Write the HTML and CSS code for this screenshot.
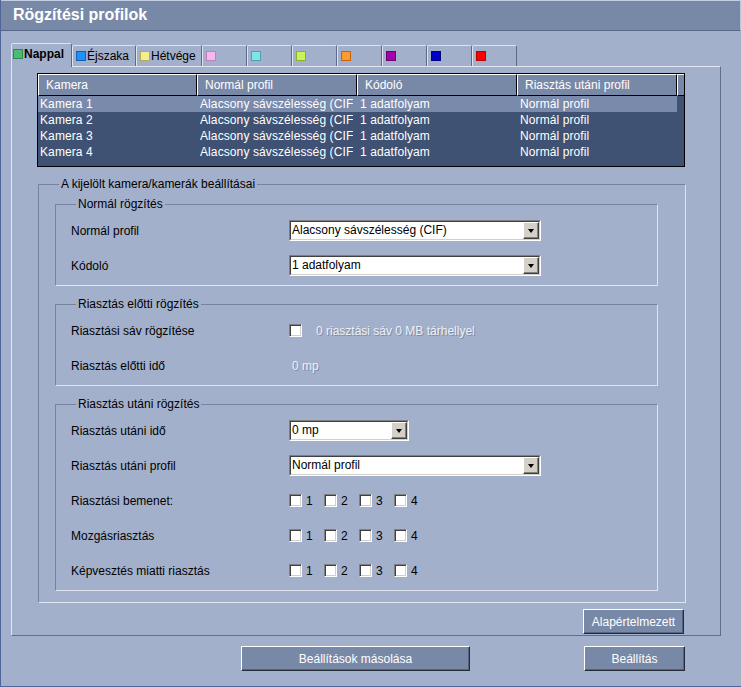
FILE: index.html
```html
<!DOCTYPE html>
<html lang="hu">
<head>
<meta charset="utf-8">
<title>Rögzítési profilok</title>
<link rel="stylesheet" href="styles.css">
</head>
<body>
<div class="window">
  <header class="titlebar"><h1 class="title">Rögzítési profilok</h1></header>
  <main class="main">
    <nav class="tabs">
      <div class="tab tab-active tab-nappal"><span class="swatch sw-green"></span>Nappal</div>
      <div class="tab tab-ejszaka"><span class="swatch sw-blue"></span>Éjszaka</div>
      <div class="tab tab-hetvege"><span class="swatch sw-yellow"></span>Hétvége</div>
      <div class="tab tab-color"><span class="swatch sw-pink"></span></div>
      <div class="tab tab-color"><span class="swatch sw-cyan"></span></div>
      <div class="tab tab-color"><span class="swatch sw-lime"></span></div>
      <div class="tab tab-color"><span class="swatch sw-orange"></span></div>
      <div class="tab tab-color"><span class="swatch sw-purple"></span></div>
      <div class="tab tab-color"><span class="swatch sw-navy"></span></div>
      <div class="tab tab-color"><span class="swatch sw-red"></span></div>
    </nav>
    <section class="panel">
      <div class="cam-table">
        <div class="thead">
          <div class="th">Kamera</div>
          <div class="th">Normál profil</div>
          <div class="th">Kódoló</div>
          <div class="th">Riasztás utáni profil</div>
          <div class="th th-stub"></div>
        </div>
        <div class="tbody">
          <div class="tr tr-selected"><div class="td">Kamera 1</div><div class="td">Alacsony sávszélesség (CIF)</div><div class="td">1 adatfolyam</div><div class="td">Normál profil</div></div>
          <div class="tr"><div class="td">Kamera 2</div><div class="td">Alacsony sávszélesség (CIF)</div><div class="td">1 adatfolyam</div><div class="td">Normál profil</div></div>
          <div class="tr"><div class="td">Kamera 3</div><div class="td">Alacsony sávszélesség (CIF)</div><div class="td">1 adatfolyam</div><div class="td">Normál profil</div></div>
          <div class="tr"><div class="td">Kamera 4</div><div class="td">Alacsony sávszélesség (CIF)</div><div class="td">1 adatfolyam</div><div class="td">Normál profil</div></div>
        </div>
      </div>

      <fieldset class="group group-outer">
        <legend class="legend legend-outer">A kijelölt kamera/kamerák beállításai</legend>

        <fieldset class="group group-inner">
          <legend class="legend legend-inner">Normál rögzítés</legend>
          <div class="row">
            <span class="label">Normál profil</span>
            <div class="select select-wide"><div class="select-inner"><span class="select-text">Alacsony sávszélesség (CIF)</span><span class="select-btn"><span class="arrow"></span></span></div></div>
          </div>
          <div class="row">
            <span class="label">Kódoló</span>
            <div class="select select-wide"><div class="select-inner"><span class="select-text">1 adatfolyam</span><span class="select-btn"><span class="arrow"></span></span></div></div>
          </div>
        </fieldset>

        <fieldset class="group group-inner">
          <legend class="legend legend-inner">Riasztás előtti rögzítés</legend>
          <div class="row">
            <span class="label">Riasztási sáv rögzítése</span>
            <span class="box"></span>
            <span class="disabled-text disabled-after-box">0 riasztási sáv 0 MB tárhellyel</span>
          </div>
          <div class="row">
            <span class="label">Riasztás előtti idő</span>
            <span class="disabled-text disabled-value">0 mp</span>
          </div>
        </fieldset>

        <fieldset class="group group-inner">
          <legend class="legend legend-inner">Riasztás utáni rögzítés</legend>
          <div class="row">
            <span class="label">Riasztás utáni idő</span>
            <div class="select select-small"><div class="select-inner"><span class="select-text">0 mp</span><span class="select-btn"><span class="arrow"></span></span></div></div>
          </div>
          <div class="row">
            <span class="label">Riasztás utáni profil</span>
            <div class="select select-wide"><div class="select-inner"><span class="select-text">Normál profil</span><span class="select-btn"><span class="arrow"></span></span></div></div>
          </div>
          <div class="row">
            <span class="label">Riasztási bemenet:</span>
            <div class="checks">
              <label class="check"><span class="box"></span>1</label>
              <label class="check"><span class="box"></span>2</label>
              <label class="check"><span class="box"></span>3</label>
              <label class="check"><span class="box"></span>4</label>
            </div>
          </div>
          <div class="row">
            <span class="label">Mozgásriasztás</span>
            <div class="checks">
              <label class="check"><span class="box"></span>1</label>
              <label class="check"><span class="box"></span>2</label>
              <label class="check"><span class="box"></span>3</label>
              <label class="check"><span class="box"></span>4</label>
            </div>
          </div>
          <div class="row">
            <span class="label">Képvesztés miatti riasztás</span>
            <div class="checks">
              <label class="check"><span class="box"></span>1</label>
              <label class="check"><span class="box"></span>2</label>
              <label class="check"><span class="box"></span>3</label>
              <label class="check"><span class="box"></span>4</label>
            </div>
          </div>
        </fieldset>
      </fieldset>

      <div class="panel-footer">
        <button class="btn" type="button">Alapértelmezett</button>
      </div>
    </section>
    <div class="actions">
      <button class="btn btn-wide" type="button">Beállítások másolása</button>
      <button class="btn" type="button">Beállítás</button>
    </div>
  </main>
</div>
</body>
</html>
```

FILE: styles.css
```css
html, body {
  margin: 0;
  padding: 0;
  background: #a3b0cb;
}
body {
  font-family: "Liberation Sans", Arial, sans-serif;
  font-size: 12px;
  color: #000;
}
.window {
  width: 741px;
  height: 687px;
  box-sizing: border-box;
  border-left: 1px solid #4f6597;
  border-bottom: 1px solid #4f6597;
  background: #a3b0cb;
  overflow: hidden;
}
.titlebar {
  height: 31px;
  box-sizing: border-box;
  margin-left: -1px;
  background: #7889a8;
  border-top: 1px solid #c3cde2;
  border-left: 1px solid #b9c4dc;
  border-right: 1px solid #b9c4dc;
  border-bottom: 1px solid #56678a;
}
.title {
  margin: 0;
  padding: 0 0 0 12px;
  font-size: 16px;
  font-weight: bold;
  color: #fff;
  line-height: 28px;
}
.main {
  padding: 12px 0 0 10px;
}

/* Tabs */
.tabs {
  display: flex;
  align-items: flex-end;
  height: 23px;
}
.tab {
  box-sizing: border-box;
  height: 21px;
  border: 1px solid;
  border-bottom: 0;
  border-color: #dde3ef #5e6b88 transparent #dde3ef;
  border-radius: 2px 2px 0 0;
  display: flex;
  align-items: center;
  padding-left: 3px;
  white-space: nowrap;
  background: #a3b0cb;
}
.tab-active {
  height: 24px;
  margin-bottom: -1px;
  position: relative;
  z-index: 1;
  padding-left: 1px;
  padding-bottom: 3px;
  font-weight: bold;
}
.tab-nappal { width: 61px; }
.tab-ejszaka { width: 64px; }
.tab-hetvege { width: 66px; }
.tab-color { width: 45px; }
.swatch {
  width: 10px;
  height: 10px;
  box-sizing: border-box;
  border: 1px solid;
  margin-right: 1px;
  flex: none;
}
.sw-green { background: #4dbb74; border-color: #2d8a52; }
.sw-blue { background: #1e93f5; border-color: #0b62b8; }
.sw-yellow { background: #f3ee8e; border-color: #b3ac5a; }
.sw-pink { background: #f8b6f0; border-color: #c380b8; }
.sw-cyan { background: #80e3ea; border-color: #4aa5ac; }
.sw-lime { background: #caf25a; border-color: #8fb02c; }
.sw-orange { background: #ff9a2e; border-color: #c2630d; }
.sw-purple { background: #a400ac; border-color: #6a0070; }
.sw-navy { background: #0000c4; border-color: #000080; }
.sw-red { background: #ff0000; border-color: #b80000; }

/* Panel */
.panel {
  width: 710px;
  height: 570px;
  box-sizing: border-box;
  border: 1px solid;
  border-color: #e2e7f1 #616d89 #616d89 #e2e7f1;
  padding: 6px 0 0 25px;
}

/* Table */
.cam-table {
  width: 648px;
  height: 94px;
  box-sizing: border-box;
  border: 1px solid #000;
  background: #3f5273;
  color: #fff;
}
.thead {
  display: grid;
  grid-template-columns: 159px 160px 160px 160px 7px;
  height: 22px;
}
.th {
  box-sizing: border-box;
  border: 1px solid;
  border-color: #fff #000 #000 #fff;
  background: #7889a8;
  padding-left: 7px;
  line-height: 20px;
  white-space: nowrap;
  overflow: hidden;
}
.th-stub {
  border-right: 0;
  padding: 0;
}
.tr {
  display: grid;
  grid-template-columns: 159px 160px 160px 160px;
  width: 639px;
  height: 16px;
  line-height: 16px;
}
.tr-selected { background: #7a8aaa; }
.td {
  padding: 0 0 0 3px;
  margin-right: 4px;
  overflow: hidden;
  white-space: nowrap;
  letter-spacing: 0.1px;
}
.td:first-child { padding-left: 2px; }

/* Groups */
.group {
  margin: 0;
  border: 1px solid;
  border-color: #75839f #dfe5f0 #dfe5f0 #75839f;
  min-inline-size: 0;
  box-sizing: border-box;
}
.legend {
  padding: 0 2px;
  line-height: 14px;
  font-size: 12px;
}
.group-outer {
  width: 648px;
  margin: 10px 0 0 1px;
  padding: 6px 0 11px 16px;
}
.legend-outer { margin-left: 4px; }
.group-inner {
  width: 603px;
  padding: 2px 0 2px 15px;
}
.group-inner + .group-inner { margin-top: 11px; }
.legend-inner { margin-left: 5px; }

.row {
  display: flex;
  align-items: center;
  height: 35px;
}
.label {
  width: 218px;
  flex: none;
  white-space: nowrap;
}

/* Select */
.select {
  height: 21px;
  box-sizing: border-box;
  border: 1px solid;
  border-color: #808080 #fff #fff #808080;
  background: #fff;
  display: flex;
}
.select-wide { width: 252px; }
.select-small { width: 120px; }
.select-inner {
  flex: 1;
  display: flex;
  border: 1px solid;
  border-color: #404040 #d4d0c8 #d4d0c8 #404040;
  min-width: 0;
}
.select-text {
  flex: 1;
  padding-left: 1px;
  line-height: 17px;
  white-space: nowrap;
  overflow: hidden;
}
.select-btn {
  width: 16px;
  height: 17px;
  box-sizing: border-box;
  background: #d4d0c8;
  border: 1px solid;
  border-color: #fff #404040 #404040 #fff;
  box-shadow: inset -1px -1px 0 #808080;
  display: flex;
  align-items: center;
  justify-content: center;
}
.arrow {
  width: 0;
  height: 0;
  border-left: 3.5px solid transparent;
  border-right: 3.5px solid transparent;
  border-top: 4px solid #000;
  margin-right: 1px;
}

/* Checkbox */
.checks { display: flex; }
.check {
  display: flex;
  align-items: center;
  width: 35px;
}
.box {
  width: 13px;
  height: 13px;
  box-sizing: border-box;
  border: 1px solid;
  border-color: #808080 #fff #fff #808080;
  box-shadow: inset 1px 1px 0 #404040, inset -1px -1px 0 #d4d0c8;
  background: #fff;
  margin-right: 4px;
  flex: none;
}
.disabled-text {
  color: #eef1f6;
  text-shadow: 1px 1px 0 #7f8aa3;
  white-space: nowrap;
}
.disabled-after-box { margin-left: 10px; }
.disabled-value { padding-left: 3px; }

/* Buttons */
.btn {
  width: 101px;
  height: 25px;
  box-sizing: border-box;
  padding: 0;
  font-family: "Liberation Sans", Arial, sans-serif;
  font-size: 12px;
  color: #fff;
  background: #7889a8;
  border: 1px solid;
  border-color: #fff #262c3a #262c3a #fff;
  box-shadow: inset -1px -1px 0 #56637e;
}
.btn-wide { width: 229px; }
.panel-footer {
  width: 647px;
  display: flex;
  justify-content: flex-end;
  margin-top: 6px;
}
.actions {
  display: flex;
  gap: 114px;
  margin-top: 10px;
  padding-left: 230px;
}
```
